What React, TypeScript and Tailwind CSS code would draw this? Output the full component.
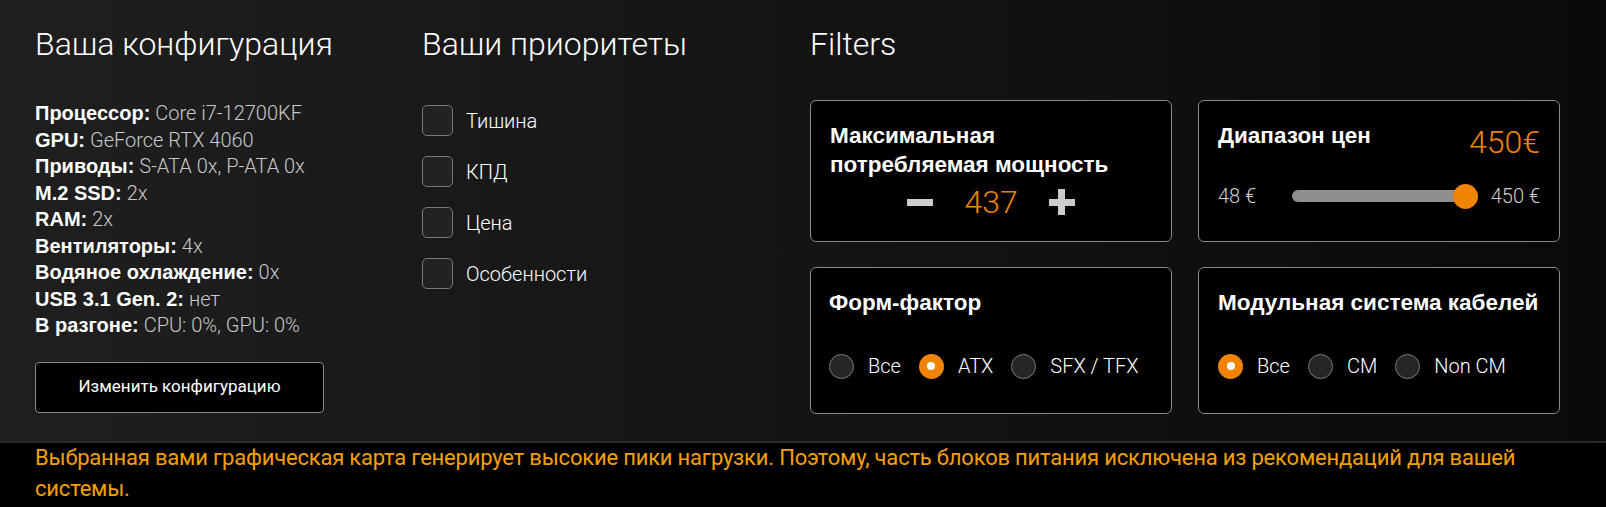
import { useState } from 'react';

const config: [string, string][] = [
  ['Процессор:', 'Core i7-12700KF'],
  ['GPU:', 'GeForce RTX 4060'],
  ['Приводы:', 'S-ATA 0x, P-ATA 0x'],
  ['M.2 SSD:', '2x'],
  ['RAM:', '2x'],
  ['Вентиляторы:', '4x'],
  ['Водяное охлаждение:', '0x'],
  ['USB 3.1 Gen. 2:', 'нет'],
  ['В разгоне:', 'CPU: 0%, GPU: 0%'],
];

const priorities = ['Тишина', 'КПД', 'Цена', 'Особенности'];

const Radio = ({ label, checked, onClick }: { label: string; checked: boolean; onClick: () => void }) => (
  <button onClick={onClick} className="flex items-center gap-[14px] text-[20px] font-light text-white">
    {checked ? (
      <span className="w-[25px] h-[25px] rounded-full bg-[#f08300] flex items-center justify-center">
        <span className="w-2 h-2 rounded-full bg-white" />
      </span>
    ) : (
      <span className="w-[25px] h-[25px] rounded-full bg-[#262626] border border-[#7a7a7a]" />
    )}
    <span>{label}</span>
  </button>
);

const CardTitle = ({ children }: { children: React.ReactNode }) => (
  <h3 className="font-['Liberation_Sans',Arial,sans-serif] font-bold text-[22.5px] leading-[29px] text-white">{children}</h3>
);

const App = () => {
  const [power, setPower] = useState<number>(437);
  const [checked, setChecked] = useState<string[]>([]);
  const [formFactor, setFormFactor] = useState<string>('ATX');
  const [cables, setCables] = useState<string>('Все');

  const toggle = (p: string) =>
    setChecked(checked.includes(p) ? checked.filter((c) => c !== p) : [...checked, p]);

  return (
    <div className="min-h-[507px] bg-black font-['Roboto',sans-serif]">
      <div className="h-[441px] bg-gradient-to-r from-[#1f1f1f] to-[#0a0a0a] pl-[35px] pr-[46px] pt-[26px] flex">
        <div className="w-[387px] shrink-0">
          <h2 className="text-[32px] leading-[36px] font-light text-white">Ваша конфигурация</h2>
          <ul className="mt-[38px] text-[20px] leading-[26.5px]">
            {config.map(([label, value]) => (
              <li key={label}>
                <span className="font-['Liberation_Sans',Arial,sans-serif] font-bold text-white">{label}</span>{' '}
                <span className="font-light text-[#c9c9c9]">{value}</span>
              </li>
            ))}
          </ul>
          <button className="mt-[23px] w-[289px] h-[51px] bg-black border border-[#8a8a8a] rounded-[4px] text-white text-[17px]">
            Изменить конфигурацию
          </button>
        </div>

        <div className="w-[388px] shrink-0">
          <h2 className="text-[32px] leading-[36px] font-light text-white">Ваши приоритеты</h2>
          <div className="mt-[43px] flex flex-col gap-[20px]">
            {priorities.map((p) => (
              <label key={p} className="flex items-center gap-[13px] cursor-pointer" onClick={() => toggle(p)}>
                <span className="w-[31px] h-[31px] rounded-[5px] border border-[#7a7a7a] bg-[#222] flex items-center justify-center text-[#f08300] text-lg">
                  {checked.includes(p) ? '✓' : ''}
                </span>
                <span className="text-[20px] font-light text-white">{p}</span>
              </label>
            ))}
          </div>
        </div>

        <div className="flex-1">
          <h2 className="text-[32px] leading-[36px] font-light text-white">Filters</h2>
          <div className="mt-[38px] grid grid-cols-2 gap-x-[26px] gap-y-[25px]">
            <div className="h-[142px] bg-black border border-[#8a8a8a] rounded-[6px] px-[19px] pt-[20px]">
              <CardTitle>
                Максимальная
                <br />
                потребляемая мощность
              </CardTitle>
              <div className="mt-[5px] flex items-center justify-center gap-[31px]">
                <button onClick={() => setPower(power - 1)} className="w-[26px] h-[26px] flex items-center">
                  <span className="block w-[26px] h-[7px] bg-[#cccccc]" />
                </button>
                <span className="text-[32px] leading-[36px] font-light text-[#f08300]">{power}</span>
                <button onClick={() => setPower(power + 1)} className="relative w-[26px] h-[26px]">
                  <span className="absolute left-0 top-[10px] w-[26px] h-[7px] bg-[#cccccc]" />
                  <span className="absolute top-0 left-[9.5px] w-[7px] h-[26px] bg-[#cccccc]" />
                </button>
              </div>
            </div>

            <div className="h-[142px] bg-black border border-[#8a8a8a] rounded-[6px] px-[19px] pt-[20px]">
              <div className="flex justify-between items-start">
                <CardTitle>Диапазон цен</CardTitle>
                <span className="mt-[3px] text-[32px] leading-[36px] font-light text-[#f08300]">450€</span>
              </div>
              <div className="mt-[21px] flex items-center text-[20px] font-light text-[#cfcfcf]">
                <span className="w-[74px] shrink-0">48 €</span>
                <div className="relative flex-1 h-[25px] flex items-center">
                  <div className="w-full h-3 rounded-full bg-[#8f8f8f]" />
                  <div className="absolute right-0 top-0 w-[25px] h-[25px] rounded-full bg-[#f08300]" />
                </div>
                <span className="ml-[13px]">450 €</span>
              </div>
            </div>

            <div className="h-[147px] bg-black border border-[#8a8a8a] rounded-[6px] px-[18px] pt-[20px]">
              <CardTitle>Форм-фактор</CardTitle>
              <div className="mt-[34px] flex items-center gap-[18px]">
                {['Все', 'ATX', 'SFX / TFX'].map((o) => (
                  <Radio key={o} label={o} checked={formFactor === o} onClick={() => setFormFactor(o)} />
                ))}
              </div>
            </div>

            <div className="h-[147px] bg-black border border-[#8a8a8a] rounded-[6px] px-[19px] pt-[20px]">
              <CardTitle>Модульная система кабелей</CardTitle>
              <div className="mt-[34px] flex items-center gap-[18px]">
                {['Все', 'CM', 'Non CM'].map((o) => (
                  <Radio key={o} label={o} checked={cables === o} onClick={() => setCables(o)} />
                ))}
              </div>
            </div>
          </div>
        </div>
      </div>

      <div className="border-t-2 border-[#2b2b2b] pl-[35px] pr-[46px] pb-[3px]">
        <p className="text-[22px] leading-[30.5px] font-normal tracking-[-0.2px] text-[#f5a000]">
          Выбранная вами графическая карта генерирует высокие пики нагрузки. Поэтому, часть блоков питания исключена из
          рекомендаций для вашей системы.
        </p>
      </div>
    </div>
  );
};

export default App;
